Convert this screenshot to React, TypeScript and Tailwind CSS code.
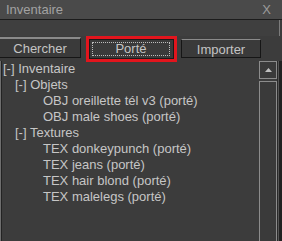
export default function App() {
  const rows: { text: string; pl: string }[] = [
    { text: "[-] Inventaire", pl: "pl-[1px]" },
    { text: "[-] Objets", pl: "pl-[13px]" },
    { text: "OBJ oreillette tél v3 (porté)", pl: "pl-[41px]" },
    { text: "OBJ male shoes (porté)", pl: "pl-[41px]" },
    { text: "[-] Textures", pl: "pl-[13px]" },
    { text: "TEX donkeypunch (porté)", pl: "pl-[41px]" },
    { text: "TEX jeans (porté)", pl: "pl-[41px]" },
    { text: "TEX hair blond (porté)", pl: "pl-[41px]" },
    { text: "TEX malelegs (porté)", pl: "pl-[41px]" },
  ];
  return (
    <div className="w-[282px] h-[241px] bg-[#3c3c3c] flex flex-col overflow-hidden font-['Liberation_Sans',Arial,sans-serif] text-[13px] leading-[16px]">
      {/* title bar */}
      <div className="h-[19px] shrink-0 bg-[#4a4a4a] flex items-center justify-between pl-[6px] pr-[11px] text-[#a2a2a2]">
        <span>Inventaire</span>
        <span className="text-[#9a9a9a]">X</span>
      </div>
      <div className="h-px shrink-0 bg-[#1c1c1c]" />
      {/* field strip */}
      <div className="h-[16px] shrink-0 bg-[#3f3f3f] mr-[2px] border-r border-[#7c7c7c]" />
      {/* buttons row */}
      <div className="h-[25px] shrink-0 flex items-start">
        <div className="mt-[1px] w-[81px] h-[21px] pt-[2px] border-t-2 border-t-[#8a8a8a] border-r border-r-[#161616] border-b border-b-[#161616] bg-[#3a3a3a] flex items-center justify-center text-[#c4c4c4]">
          Chercher
        </div>
        <div className="ml-[5px] w-[91px] h-[26px] shrink-0 border-[3px] border-[#e2151d] bg-[#3a3a3a]">
          <div className="w-full h-full border border-[#1a1a1a] bg-[#3a3a3a] pt-[2px] pb-[2px] pl-[2px] pr-[3px]">
            <div className="w-full h-full border border-dotted border-[#bdbdbd] flex items-center justify-center text-[#c4c4c4] leading-[12px]">
              Porté
            </div>
          </div>
        </div>
        <div className="ml-[4px] mt-[3px] w-[80px] h-[19px] pt-[2px] border border-[#161616] border-t-[#8a8a8a] bg-[#3a3a3a] flex items-center justify-center text-[#c4c4c4]">
          Importer
        </div>
      </div>
      {/* list + scrollbar */}
      <div className="flex-1 flex min-h-0">
        <div className="w-px bg-[#6e6e6e]" />
        <div className="w-px bg-[#232323]" />
        <div className="w-[257px] flex flex-col text-[#c6c6c6]">
          {rows.map((r, i) => (
            <div key={i} className={`h-[16px] whitespace-nowrap ${r.pl}`}>
              {r.text}
            </div>
          ))}
        </div>
        <div className="w-[18px] flex flex-col">
          <div className="h-[18px] shrink-0 border border-[#8c8c8c] bg-[#3a3a3a] flex items-center justify-center">
            <svg width="7" height="4" viewBox="0 0 7 4">
              <polygon points="3.5,0 7,4 0,4" fill="#c0c0c0" />
            </svg>
          </div>
          <div className="h-[2px] shrink-0" />
          <div className="flex-1 border-l border-r border-t border-[#8c8c8c] bg-[#3a3a3a]" />
        </div>
        <div className="w-px bg-[#2a2a2a]" />
        <div className="w-px bg-[#555555]" />
        <div className="w-[3px] bg-[#222222]" />
      </div>
    </div>
  );
}
